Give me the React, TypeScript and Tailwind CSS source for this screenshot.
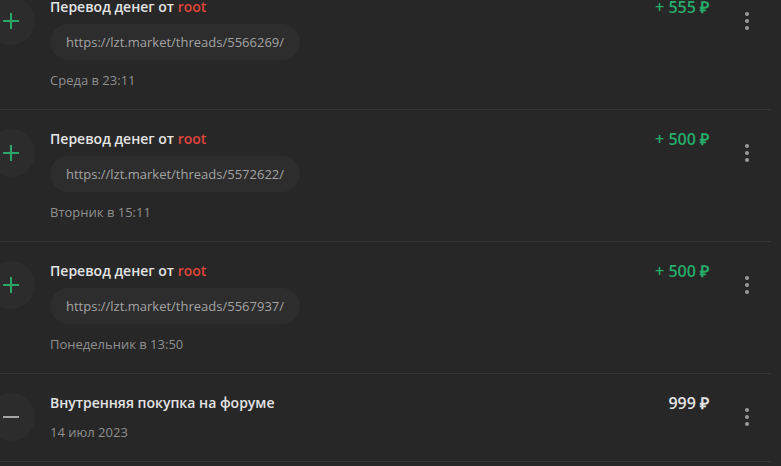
import type { ReactNode } from 'react';

// One row of the balance history list
interface Payment {
  title: ReactNode;
  url?: string;
  date: string;
  amount: string;
  incoming: boolean;
}

const payments: Payment[] = [
  {
    title: <>Перевод денег от <span className="text-[#e0453c]">root</span></>,
    url: 'https://lzt.market/threads/5566269/',
    date: 'Среда в 23:11',
    amount: '+ 555 ₽',
    incoming: true,
  },
  {
    title: <>Перевод денег от <span className="text-[#e0453c]">root</span></>,
    url: 'https://lzt.market/threads/5572622/',
    date: 'Вторник в 15:11',
    amount: '+ 500 ₽',
    incoming: true,
  },
  {
    title: <>Перевод денег от <span className="text-[#e0453c]">root</span></>,
    url: 'https://lzt.market/threads/5567937/',
    date: 'Понедельник в 13:50',
    amount: '+ 500 ₽',
    incoming: true,
  },
  {
    title: 'Внутренняя покупка на форуме',
    date: '14 июл 2023',
    amount: '999 ₽',
    incoming: false,
  },
];

function Icon({ incoming }: { incoming: boolean }) {
  return (
    <div className="-ml-[13px] mt-[19px] flex h-12 w-12 shrink-0 items-center justify-center rounded-full bg-[#2c2c2c]">
      <svg width="18" height="18" viewBox="0 0 18 18" fill="none" strokeWidth="2" strokeLinecap="butt">
        {incoming && <path d="M9 1v16" stroke="#2ea56d" />}
        <path d="M1 9h16" stroke={incoming ? '#2ea56d' : '#a5a5a5'} />
      </svg>
    </div>
  );
}

function Row({ p }: { p: Payment }) {
  return (
    <div className="flex w-[771px] border-b border-[#353535] pt-5 pb-5">
      <div className="-mt-5 flex">
        <Icon incoming={p.incoming} />
      </div>
      <div className="ml-[15px] flex min-w-0 flex-1 flex-col items-start">
        <div className="text-[14px] leading-[18px] font-semibold text-[#e4e4e4]">{p.title}</div>
        {p.url && (
          <div className="mt-2 rounded-full bg-[#2d2d2d] px-4 py-[9px] text-[13px] leading-[18px] text-[#a3a3a3]">
            {p.url}
          </div>
        )}
        <div className="mt-[11px] text-[13px] leading-[18px] text-[#8f8f8f]">{p.date}</div>
      </div>
      <div
        className={`text-[16px] leading-[18px] font-semibold ${p.incoming ? 'text-[#25ad6c]' : 'text-[#e4e4e4]'}`}
      >
        {p.amount}
      </div>
      <div className="ml-[26px] flex w-6 flex-col items-center gap-[3px] pt-[14px]">
        <span className="h-1 w-1 rounded-full bg-[#9a9a9a]" />
        <span className="h-1 w-1 rounded-full bg-[#9a9a9a]" />
        <span className="h-1 w-1 rounded-full bg-[#9a9a9a]" />
      </div>
      <div className="w-3" />
    </div>
  );
}

export default function App() {
  return (
    <div className="h-[466px] w-[781px] overflow-hidden bg-[#272727] font-['Open_Sans',sans-serif]">
      <div className="-mt-[22px]">
        {payments.map((p, i) => (
          <Row key={i} p={p} />
        ))}
      </div>
    </div>
  );
}
